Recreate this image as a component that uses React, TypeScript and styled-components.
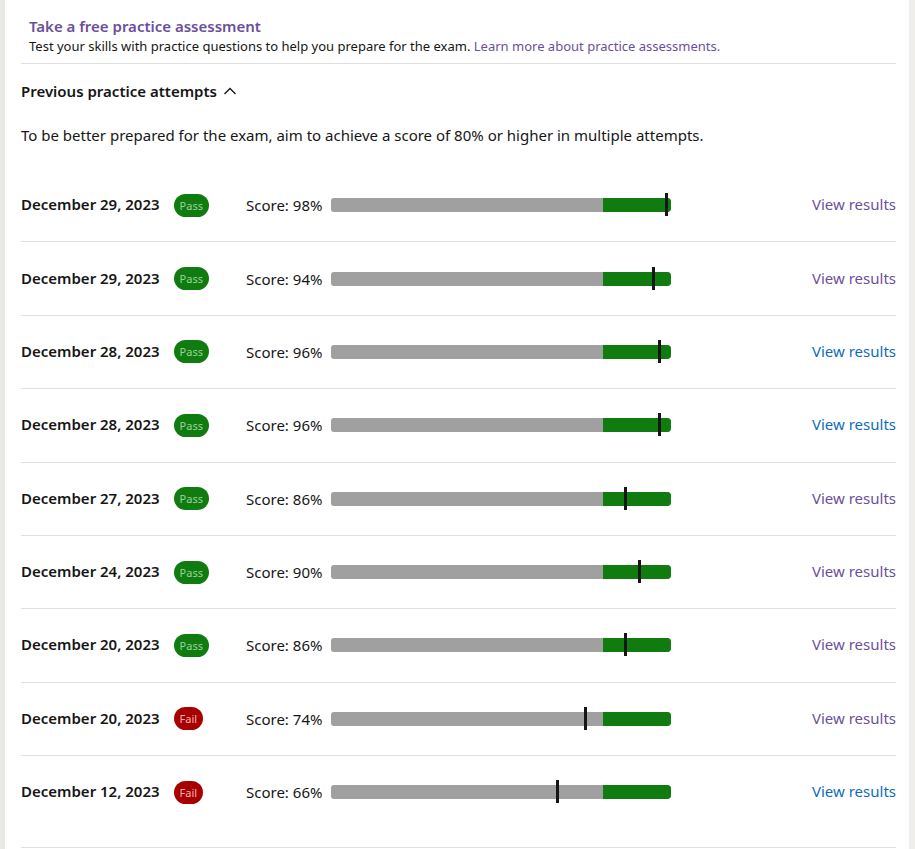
import React from "react";
import styled, { createGlobalStyle } from "styled-components";

const Global = createGlobalStyle`
  html, body { margin: 0; padding: 0; background: #ffffff; }
  body { font-family: "Noto Sans", "Open Sans", sans-serif; color: #161616; }
`;

const Frame = styled.div`
  width: 915px;
  min-height: 849px;
  box-sizing: border-box;
  border-left: 5px solid #e9e8e3;
  border-right: 6px solid #efeeea;
  background: #fff;
  padding: 0 13px 0 16px;
`;

const Intro = styled.div`
  padding: 15px 8px 8px;
  border-bottom: 1px solid #e0e0e0;
`;

const Title = styled.div`
  font-size: 15px;
  font-weight: 600;
  color: #6b4f9d;
  line-height: 22px;
`;

const Sub = styled.div`
  font-size: 13px;
  line-height: 18px;
`;

const Link = styled.a<{ $visited?: boolean }>`
  color: ${(p) => (p.$visited ? "#6b4f9d" : "#0f6cbd")};
  text-decoration: none;
`;

const SectionHead = styled.div`
  display: flex;
  align-items: center;
  gap: 6px;
  margin-top: 16px;
  font-size: 15px;
  font-weight: 600;
  line-height: 22px;
`;

const Para = styled.p`
  margin: 22px 0 0;
  font-size: 15px;
  line-height: 22px;
`;

const List = styled.div`
  margin-top: 23px;
  padding-bottom: 19px;
  border-bottom: 1px solid #e0e0e0;
`;

const Row = styled.div`
  display: grid;
  grid-template-columns: 225px 85px 340px 1fr;
  align-items: center;
  height: 72.375px;
  & + & { border-top: 1px solid #e0e0e0; }
`;

const DateCell = styled.div`
  display: flex;
  align-items: center;
  gap: 14px;
  font-size: 15px;
  font-weight: 600;
  margin-top: -2px;
`;

const Badge = styled.span<{ $pass: boolean }>`
  display: inline-flex;
  align-items: center;
  justify-content: center;
  height: 23px;
  padding: 0 6px;
  border-radius: 12px;
  font-size: 11px;
  font-weight: 400;
  background: ${(p) => (p.$pass ? "#107c10" : "#a80000")};
  color: ${(p) => (p.$pass ? "#9ad29a" : "#f1b3b3")};
  margin-top: 2px;
`;

const Score = styled.div`
  font-size: 15px;
  white-space: nowrap;
`;

const Bar = styled.div`
  position: relative;
  height: 14px;
  background: #a0a0a0;
  border-radius: 3px 4px 4px 3px;
`;

const PassZone = styled.div`
  position: absolute;
  top: 0;
  bottom: 0;
  left: 80%;
  right: 0;
  background: #107c10;
  border-radius: 0 4px 4px 0;
`;

const Marker = styled.div`
  position: absolute;
  top: -5px;
  width: 3px;
  height: 23px;
  background: #161616;
  margin-left: 1px;
`;

const Action = styled.div`
  text-align: right;
  font-size: 15px;
  margin-top: -2px;
`;

const rows = [
  { date: "December 29, 2023", pass: true, score: 98, visited: true },
  { date: "December 29, 2023", pass: true, score: 94, visited: true },
  { date: "December 28, 2023", pass: true, score: 96, visited: false },
  { date: "December 28, 2023", pass: true, score: 96, visited: false },
  { date: "December 27, 2023", pass: true, score: 86, visited: true },
  { date: "December 24, 2023", pass: true, score: 90, visited: true },
  { date: "December 20, 2023", pass: true, score: 86, visited: true },
  { date: "December 20, 2023", pass: false, score: 74, visited: true },
  { date: "December 12, 2023", pass: false, score: 66, visited: false },
];

const Chevron = () => (
  <svg width="14" height="14" viewBox="0 0 14 14" fill="none">
    <path d="M1.5 10 L7 4.5 L12.5 10" stroke="#161616" strokeWidth="1.3" />
  </svg>
);

export default function App() {
  return (
    <>
      <Global />
      <Frame>
        <Intro>
          <Title>Take a free practice assessment</Title>
          <Sub>
            Test your skills with practice questions to help you prepare for the exam.{" "}
            <Link $visited href="#">Learn more about practice assessments.</Link>
          </Sub>
        </Intro>
        <SectionHead>
          Previous practice attempts <Chevron />
        </SectionHead>
        <Para>
          To be better prepared for the exam, aim to achieve a score of 80% or higher in multiple attempts.
        </Para>
        <List>
          {rows.map((r, i) => (
            <Row key={i}>
              <DateCell>
                {r.date}
                <Badge $pass={r.pass}>{r.pass ? "Pass" : "Fail"}</Badge>
              </DateCell>
              <Score>Score: {r.score}%</Score>
              <Bar>
                <PassZone />
                <Marker style={{ left: `${r.score}%` }} />
              </Bar>
              <Action>
                <Link $visited={r.visited} href="#">View results</Link>
              </Action>
            </Row>
          ))}
        </List>
      </Frame>
    </>
  );
}
